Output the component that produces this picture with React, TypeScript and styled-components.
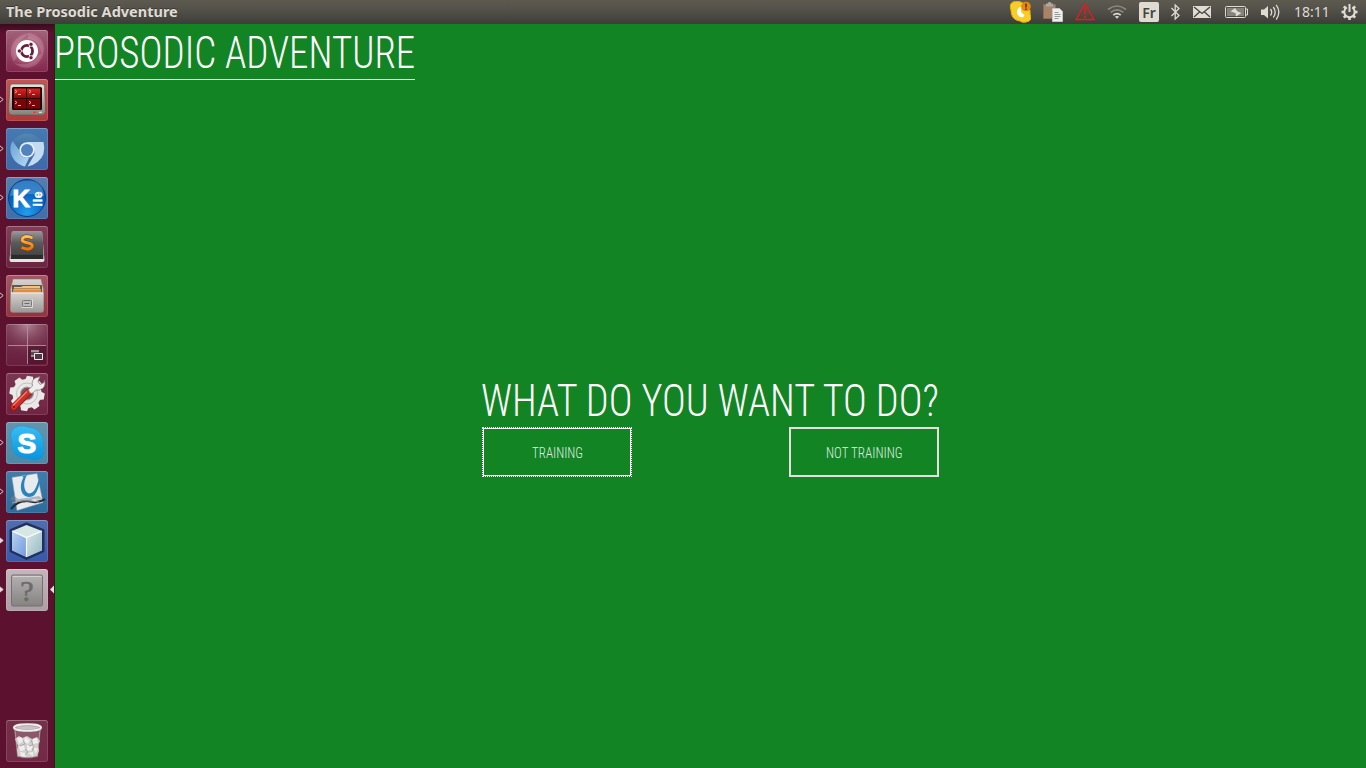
import React, { useLayoutEffect, useRef, useState } from "react";
import styled, { createGlobalStyle, css } from "styled-components";

const GlobalStyle = createGlobalStyle`
  * { box-sizing: border-box; }
  body { margin: 0; background: #138424; overflow: hidden; }
`;

const condensed = css`
  font-family: Roboto, "Liberation Sans", sans-serif;
  font-weight: 330;
  font-stretch: 75%;
`;

const Desktop = styled.div`
  width: 100vw;
  height: 100vh;
  display: flex;
  flex-direction: column;
`;

const TopBar = styled.header`
  flex: none;
  height: 24px;
  padding: 0 8px 0 6px;
  display: flex;
  justify-content: space-between;
  align-items: center;
  background: linear-gradient(#5d5a50 0, #53514a 40%, #3e3d38 100%);
  color: #dfdbd2;
  font-family: "Noto Sans", "Open Sans", sans-serif;
`;

const WindowTitle = styled.div`
  font-size: 14px;
  font-weight: 700;
  line-height: 24px;
  text-shadow: 0 -1px 0 rgba(30, 28, 25, 0.5);
`;

const Tray = styled.div`
  display: flex;
  gap: 12px;
  height: 24px;
  & > svg { display: block; flex: none; }
`;

const Keyboard = styled.div`
  width: 20px;
  height: 20px;
  margin-top: 2px;
  border-radius: 2px;
  background: #dfdbd2;
  color: #45433e;
  display: flex;
  justify-content: center;
  font-size: 14px;
  font-weight: 600;
  line-height: 21px;
`;

const Clock = styled.div`
  width: 35px;
  font-size: 14px;
  line-height: 24px;
`;

const Body = styled.div`
  flex: 1;
  display: flex;
  min-height: 0;
`;

const Launcher = styled.nav`
  flex: none;
  width: 55px;
  padding: 6px 0;
  display: flex;
  flex-direction: column;
  gap: 7px;
  border-right: 1px solid #3d1626;
  background: linear-gradient(#3d0a1e 0, #5c112f 9px, #5c112f 100%);
`;

const Slot = styled.div<{ $last?: boolean }>`
  flex: none;
  height: 42px;
  display: flex;
  align-items: center;
  margin-top: ${(p) => (p.$last ? "auto" : "0")};
`;

const Marker = styled.div`
  width: 6px;
  height: 9px;
  margin-top: -1px;
  & > svg { display: block; }
`;

const Tile = styled.div<{ $top: string; $bottom: string }>`
  width: 42px;
  height: 42px;
  border-radius: 3px;
  overflow: hidden;
  background: linear-gradient(${(p) => p.$top}, ${(p) => p.$bottom});
  box-shadow: inset 0 0 0 1px rgba(255, 255, 255, 0.12), inset 0 1px 0 rgba(255, 255, 255, 0.2);
  & > svg { display: block; }
`;

const Game = styled.main`
  flex: 1;
  background: #138424;
  color: #fff;
  display: flex;
  flex-direction: column;
  align-items: flex-start;
`;

const Heading = styled.h1`
  ${condensed}
  margin: 0;
  height: 56px;
  font-size: 44px;
  line-height: 58px;
  border-bottom: 1px solid #fff;
`;

const Stage = styled.section`
  flex: 1;
  align-self: stretch;
  display: flex;
  flex-direction: column;
  align-items: center;
  justify-content: center;
`;

const Prompt = styled.div`
  width: 457px;
`;

const Question = styled.h2`
  ${condensed}
  margin: 0;
  height: 55px;
  font-size: 44px;
  line-height: 58px;
`;

const Choices = styled.div`
  display: flex;
  justify-content: space-between;
`;

const Choice = styled.button<{ $focused?: boolean }>`
  ${condensed}
  width: 150px;
  height: 50px;
  padding: 3px 0 0;
  display: flex;
  align-items: center;
  justify-content: center;
  background: transparent;
  color: #dfeee1;
  font-size: 15px;
  outline: none;
  border: ${(p) => (p.$focused ? "1px dotted #fff" : "2px solid #e4e0e0")};
  box-shadow: ${(p) => (p.$focused ? "inset 0 0 0 1px #fff" : "none")};
`;

const FitBox = styled.span`
  display: block;
  white-space: nowrap;
`;

const FitInner = styled.span`
  display: inline-block;
  transform-origin: 0 50%;
`;

/* Squeezes or stretches one line of text to an exact width. */
function Fit({ width, children }: { width: number; children: string }) {
  const ref = useRef<HTMLSpanElement>(null);
  const [scale, setScale] = useState(1);
  useLayoutEffect(() => {
    if (ref.current) setScale(width / ref.current.offsetWidth);
  }, [width, children]);
  return (
    <FitBox style={{ width }}>
      <FitInner ref={ref} style={{ transform: `scaleX(${scale})` }}>
        {children}
      </FitInner>
    </FitBox>
  );
}

const HeadlineText = styled.div`
  margin-left: -1px;
`;

const Icon = ({ children }: { children: React.ReactNode }) => (
  <svg width="42" height="42" viewBox="0 0 42 42">{children}</svg>
);

const DashIcon = () => (
  <Icon>
    <defs>
      <radialGradient id="dash"><stop offset="0" stopColor="#f0ccd8" /><stop offset=".6" stopColor="#c0748f" stopOpacity=".6" /><stop offset="1" stopColor="#8d3456" stopOpacity="0" /></radialGradient>
    </defs>
    <circle cx="21" cy="20" r="22" fill="url(#dash)" opacity=".7" />
    <g fill="#f0ccd8" opacity=".22">
      <path d="M8 32C0 18 8 4 26 3 14 7 9 16 12 25z" /><path d="M22 3c14 1 20 14 13 26 1-12-3-19-13-20z" /><path d="M37 22C36 36 20 43 8 33c10 3 19 1 23-6z" />
    </g>
    <circle cx="21" cy="21" r="11" fill="#fff" />
    <circle cx="21" cy="21" r="5.6" fill="none" stroke="#6a1d3c" strokeWidth="2.8" />
    <g stroke="#fff" strokeWidth="1.1"><path d="M21 21h-8M21 21l4.6-8M21 21l4.6 8" /></g>
    <circle cx="21" cy="21" r="3.9" fill="#fff" />
    <g fill="#6a1d3c" stroke="#fff" strokeWidth=".7"><circle cx="13.4" cy="21" r="2.1" /><circle cx="25" cy="14.3" r="2.1" /><circle cx="25" cy="27.7" r="2.1" /></g>
  </Icon>
);

const TerminalIcon = () => (
  <Icon>
    <defs>
      <linearGradient id="mon" x2="0" y2="1"><stop stopColor="#e4e2dc" /><stop offset="1" stopColor="#85827c" /></linearGradient>
      <linearGradient id="red" x2="0" y2="1"><stop stopColor="#e02424" /><stop offset="1" stopColor="#8d0808" /></linearGradient>
    </defs>
    <path d="M6 5h30q2.5 0 2.5 2.5L39.5 31q0 5-4 5h-29q-4 0-4-5L4 7.500q0-2.500 2-2.500z" fill="url(#mon)" stroke="#5e5a57" strokeWidth=".7" />
    <rect x="6" y="8" width="30" height="23" rx="1.5" fill="#250406" />
    <path d="M8 9.500h12v9.500H8zM21 9.500h13v9.500H21z" fill="url(#red)" />
    <path d="M8 20h12v9.500H8zM21 20h13v9.500H21z" fill="#7a0508" />
    <path d="M9 11l2 1.5L9 14M12 15.500h3M23 11l2 1.5-2 1.500M26 15.500h3M9 22l2 1.5L9 25M12 26.500h3M23 22l2 1.5-2 1.500M26 26.500h3" fill="none" stroke="#ffb9b9" strokeWidth=".9" />
    <path d="M27 33.300h3" stroke="#fa3535" strokeWidth="1.5" />
    <path d="M33 33.300h3" stroke="#eee" />
  </Icon>
);

const ChromiumIcon = () => (
  <Icon>
    <defs>
      <linearGradient id="cr" x2="0" y2="1"><stop stopColor="#5587b0" /><stop offset="1" stopColor="#3a6ea5" /></linearGradient>
      <linearGradient id="cl" x2="1" y2="1"><stop stopColor="#6ba3d4" /><stop offset="1" stopColor="#b5d8f2" /></linearGradient>
    </defs>
    <path d="M7 13Q12 5.500 21 5.500T35.500 14H21L13 22z" fill="url(#cr)" />
    <path d="M6.500 13C1 23 7 36 19 38.500L23 30q-8 1-10-8z" fill="url(#cl)" />
    <path d="M21 14h16.500q3 13-6 20-5 4-10 4.500l7-12q1-7-7.500-12.500z" fill="#c3dbf1" />
    <circle cx="21" cy="22" r="7.700" fill="#e3eef8" />
    <circle cx="21" cy="22" r="6" fill="#5283bd" />
  </Icon>
);

const KileIcon = () => (
  <Icon>
    <defs>
      <radialGradient id="kile" cx=".5" cy=".9" r=".95"><stop stopColor="#239df0" /><stop offset=".55" stopColor="#0763bd" /><stop offset="1" stopColor="#064997" /></radialGradient>
    </defs>
    <circle cx="21" cy="21" r="18.5" fill="url(#kile)" stroke="#064384" />
    <path d="M4 19Q5 4 21 3.5T38 19Q22 15 4 19z" fill="#6eb4ec" opacity=".45" />
    <text x="6.500" y="29.500" fill="#fff" stroke="#fff" strokeWidth="1" fontFamily="Liberation Sans, sans-serif" fontSize="24" fontWeight="700">K</text>
    <text transform="translate(35.500 29.500) rotate(-90)" fill="#fff" stroke="#fff" strokeWidth=".4" fontFamily="Liberation Sans, sans-serif" fontSize="12" fontWeight="700" textLength="15">ile</text>
  </Icon>
);

const SublimeIcon = () => (
  <Icon>
    <defs>
      <linearGradient id="sub" x2="0" y2="1"><stop stopColor="#9a9a9a" /><stop offset=".45" stopColor="#5a5a5a" /><stop offset="1" stopColor="#404040" /></linearGradient>
      <linearGradient id="so" x2="0" y2="1"><stop stopColor="#ffc15b" /><stop offset="1" stopColor="#ec7306" /></linearGradient>
    </defs>
    <path d="M6 6h30l2.500 28q0 2-2 2h-31q-2 0-2-2z" fill="#e4e2e2" />
    <path d="M7.500 5h27q2 0 2 2l1 22q0 2-2 2h-29q-2 0-2-2l1-22q0-2 2-2z" fill="url(#sub)" />
    <path d="M5 27.500h32l.5 5.500h-33z" fill="#2b2b2b" /><path d="M5 28h32" stroke="#6b6b6b" strokeWidth=".7" />
    <path d="M26.500 12Q21 9.500 17.500 11.500 14 14.500 19 16.200 27.500 17.500 26 21 23 25 15.500 21.500" fill="none" stroke="#6b3a12" strokeWidth="4" />
    <path d="M26.500 12Q21 9.500 17.500 11.500 14 14.500 19 16.200 27.500 17.500 26 21 23 25 15.500 21.500" fill="none" stroke="url(#so)" strokeWidth="3" />
  </Icon>
);

const FilesIcon = () => (
  <Icon>
    <defs>
      <linearGradient id="cab" x2="0" y2="1"><stop stopColor="#d5d2cf" /><stop offset="1" stopColor="#9a9896" /></linearGradient>
    </defs>
    <path d="M7 4h28l2.500 10v21q0 2-2 2h-29q-2 0-2-2V14z" fill="url(#cab)" stroke="#817c78" strokeWidth=".6" />
    <path d="M6 10h30v8H6z" fill="#65594c" />
    <path d="M8 12h7l2-1h17v2H8z" fill="#f6c276" /><path d="M7 14h28v4H7z" fill="#e58a37" /><path d="M8 14h26" stroke="#fbbf6f" />
    <path d="M5 17.500h32.500V35q0 2.500-2 2.500h-29q-2 0-2-2.500z" fill="url(#cab)" /><path d="M5 18h32" stroke="#eee" />
    <rect x="16.5" y="25.5" width="9" height="6" rx="1" fill="#bebcb9" stroke="#777" /><path d="M15.5 32.5h11v-8" fill="none" stroke="#eee" strokeWidth=".7" /><path d="M18.5 28.5h5" stroke="#6c6a68" />
  </Icon>
);

const WorkspaceIcon = () => (
  <Icon>
    <defs><radialGradient id="ws" cx=".5" cy="0" r=".75"><stop stopColor="#d8bcc6" stopOpacity=".6" /><stop offset="1" stopColor="#81415a" stopOpacity="0" /></radialGradient></defs>
    <path d="M0 0h42v42H0z" fill="url(#ws)" />
    <path d="M22 22h18v18H22z" fill="#421024" opacity=".55" />
    <path d="M21.5 2v38M2 21.5h38" stroke="#b490a0" strokeWidth=".9" />
    <path d="M25 27h8v5h-8z" fill="#5a4850" /><path d="M25 27h8M25 32h4" stroke="#bdb2b6" strokeWidth="1.4" />
    <path d="M28.5 29.5h8v6h-8z" fill="#493c42" stroke="#f0ecee" />
  </Icon>
);

const SettingsIcon = () => (
  <Icon>
    <g transform="translate(21 20.5)">
      <g fill="#e9e8e7">
        {[0, 45, 90, 135].map((a) => <path key={a} transform={`rotate(${a + 10})`} d="M-3-17.500h6l1.500 5v25l-1.500 5h-6l-1.500-5v-25z" />)}
        <circle r="14.500" />
      </g>
      <circle r="10.500" fill="none" stroke="#c4c2c1" />
      <circle r="6.500" fill="#7f5462" stroke="#aaa5a6" />
    </g>
    <path d="M7.500 34.500L23 19" stroke="#8a1a16" strokeWidth="7" strokeLinecap="round" />
    <path d="M7.800 34L23 18.500" stroke="#cf2f27" strokeWidth="5.500" strokeLinecap="round" />
    <path d="M7 32.500L21 18.500" stroke="#f08072" strokeWidth="1.300" />
    <circle cx="8" cy="34" r="1" fill="#8e1010" />
    <path d="M22.500 16.500l4-3.500q-1.500-6 3-8l4.500-1.500-2 5 2 3 4-2 .500-2.500q1.500 6-2 8.500-3.500 2.500-6.500 1.500l-4 3.500q-3 0-3.500-4z" fill="#eee" stroke="#81777a" strokeWidth=".7" />
  </Icon>
);

const SkypeIcon = () => (
  <Icon>
    <defs><linearGradient id="sky" x2="0" y2="1"><stop stopColor="#39bdf2" /><stop offset="1" stopColor="#0794df" /></linearGradient></defs>
    <path d="M13 4q5-1 9 1 14 1 15.500 15-.5 4 .5 8 0 9-8 10-5 0-8-1.500Q7 37 5.500 23q.5-4-1-9 0-8 8.500-10z" fill="url(#sky)" stroke="#2c91c0" strokeWidth=".6" />
    <text x="11.500" y="31" fill="#fff" stroke="#fff" strokeWidth="1.200" fontFamily="Liberation Sans, sans-serif" fontSize="28" fontWeight="700">S</text>
  </Icon>
);

const WriterIcon = () => (
  <Icon>
    <path d="M6 6.500l25-4 6 29-26 8z" fill="#e8ebee" stroke="#9ba8b3" strokeWidth=".5" />
    <path d="M16 5.500l5-1.500c-4 6-4 17 2 18.500 6 0 8-9 11-17.500l1.500.500C33 15 31 26 23.500 26 14 26 13 14 17.500 6.500z" fill="#2b83be" />
    <path d="M4 29l3-5 5 4 8-1 13-2 4 4-9-1-9 4-10-1z" fill="#78858d" opacity=".5" />
    <path d="M5 38c5-6 12-9 19-7.500q9 2 15-2.500" fill="none" stroke="#292d32" strokeWidth="2.1" />
    <path d="M6 32q10-4 27-1" fill="none" stroke="#9aa5ad" strokeWidth="1" />
  </Icon>
);

const CubeIcon = () => (
  <Icon>
    <defs>
      <linearGradient id="cubeL" x2="1" y2="1"><stop stopColor="#b8d2f1" /><stop offset="1" stopColor="#7399df" /></linearGradient>
      <linearGradient id="cubeR" x2="1" y2="1"><stop stopColor="#d5e5e7" /><stop offset="1" stopColor="#96b8c4" /></linearGradient>
    </defs>
    <path d="M20.5 4L37 10.500V31L20.5 38.500 5 31V10.500z" fill="#f1f6fa" stroke="#22305f" strokeWidth="3" strokeLinejoin="round" />
    <path d="M20.5 5L36 11 20.5 17.500 6 11z" fill="#d6e7e4" />
    <path d="M6 11.500l14 6.500v19L6 30.500z" fill="url(#cubeL)" /><path d="M36 11.500l-15 6.500v19l15-6.500z" fill="url(#cubeR)" />
    <path d="M6 11l14.5 6.500L36 11M20.5 17.500v19" stroke="#f6fafb" fill="none" strokeWidth="1.2" />
  </Icon>
);

const UnknownIcon = () => (
  <Icon>
    <defs><linearGradient id="unk" x2="0" y2="1"><stop stopColor="#b4b2b1" /><stop offset="1" stopColor="#858382" /></linearGradient></defs>
    <rect x="5.5" y="6" width="31" height="31" rx="1.5" fill="url(#unk)" stroke="#737171" />
    <path d="M7 7.5h28" stroke="#d2d0d0" />
    <text x="21" y="31.500" textAnchor="middle" fill="#6d6b6b" stroke="#6d6b6b" strokeWidth=".7" fontFamily="Liberation Serif, serif" fontSize="30">?</text>
  </Icon>
);

const TrashIcon = () => (
  <Icon>
    <path d="M8 8h27l-3 29q-11 3-21 0z" fill="#baa5ad" opacity=".35" />
    <path d="M9 10l3 27M34 10l-3 27" stroke="#b7a4ab" strokeWidth=".8" />
    <path d="M9 19l4-3 3 2 5-2 5 3 5-2 3 4-2 4 1 6-2 5q-10 3-19 0l-1-6 1-4z" fill="#d0cfce" />
    <g fill="#efeeed"><path d="M11 18l4-1 3 4-5 3zM19 17l5 3-2 4-4-2zM27 19l4-1 1 5-5 1zM13 26l5-1 1 5-5 1zM21 25l6 1-2 5-4-1zM28 27l4 2-3 5zM14 32l5 1 1 4-5-1zM22 33l5-1v4z" /></g>
    <path d="M17 20l2 4-5 2M25 20l2 5-4 1M19 29l3 3-3 3M28 26l-2 5" stroke="#aaa7a7" fill="none" />
    <ellipse cx="21.5" cy="7.500" rx="13.5" ry="3.3" fill="#a79ba0" stroke="#eeecec" strokeWidth="2" />
    <ellipse cx="21.5" cy="7.6" rx="10.7" ry="1.7" fill="#c9c4c5" />
  </Icon>
);

type Running = "open" | "active";
const apps: { name: string; art: React.ReactNode; top: string; bottom: string; running?: Running; current?: boolean }[] = [
  { name: "dash", art: <DashIcon />, top: "#a1647a", bottom: "#84284d" },
  { name: "terminal", art: <TerminalIcon />, top: "#bf5757", bottom: "#b03939", running: "open" },
  { name: "chromium", art: <ChromiumIcon />, top: "#4779b2", bottom: "#3d6aaa", running: "open" },
  { name: "kile", art: <KileIcon />, top: "#547faf", bottom: "#416da9", running: "open" },
  { name: "sublime", art: <SublimeIcon />, top: "#804158", bottom: "#692440" },
  { name: "files", art: <FilesIcon />, top: "#a35863", bottom: "#92343d", running: "open" },
  { name: "workspaces", art: <WorkspaceIcon />, top: "#77364f", bottom: "#681e3d" },
  { name: "settings", art: <SettingsIcon />, top: "#7b3651", bottom: "#712442" },
  { name: "skype", art: <SkypeIcon />, top: "#6594ad", bottom: "#4b89a6", running: "open" },
  { name: "writer", art: <WriterIcon />, top: "#427da9", bottom: "#2c6c9c", running: "open" },
  { name: "netbeans", art: <CubeIcon />, top: "#526ead", bottom: "#3659aa", running: "active" },
  { name: "unknown", art: <UnknownIcon />, top: "#c4b6bc", bottom: "#ad9ea6", running: "active", current: true },
];

const SkypeTray = () => (
  <svg width="22" height="24" viewBox="0 0 22 24">
    <path d="M4 2q6-2 12 2 6 4 5 10 3 7-4 8-4 1-6-1-9-1-9-11Q0 4 4 2z" fill="#f8cd25" stroke="#e6b416" />
    <path d="M10.500 7q-5 5-.5 9.500l3 1q2-.5 2.500-2.500-5-2-3-8z" fill="#fff" />
    <circle cx="17" cy="6.5" r="4.8" fill="#e98714" /><path d="M17 3.5v4M17 8.5v1.5" stroke="#683303" strokeWidth="1.6" />
  </svg>
);
const ClipboardTray = () => (
  <svg width="20" height="24" viewBox="0 0 20 24">
    <path d="M.5 4.500h12v14H.5z" fill="#a78468" stroke="#8d6c55" /><path d="M3 3.500h2L5.500 2h2L8 3.500h2v3H3z" fill="#aaa9a5" />
    <path d="M9.500 8.500h7l3 3v10h-10z" fill="#eee" stroke="#c4c4c4" /><path d="M11.500 12.500h4M11.500 14.500h6M11.500 16.500h6M11.500 18.500h4" stroke="#999" />
  </svg>
);
const WarningTray = () => (
  <svg width="20" height="24" viewBox="0 0 20 24">
    <path d="M10 4L19 19.5H1z" fill="none" stroke="#f21717" strokeWidth="1.3" /><path d="M10 8.5v6M10 16v2" stroke="#f21717" strokeWidth="1.5" />
  </svg>
);
const WifiTray = () => (
  <svg width="20" height="24" viewBox="0 0 20 24" fill="none" strokeWidth="1.7">
    <path d="M1 9.5q9-7 18 0" stroke="#8b8881" /><path d="M3.7 12.3q6.3-5 12.6 0" stroke="#8b8881" /><path d="M6.3 15q3.7-2.8 7.4 0" stroke="#dfdbd2" /><path d="M7.8 16.5q2.2-1.2 4.4 0L10 18.8z" fill="#dfdbd2" />
  </svg>
);
const BluetoothTray = () => (
  <svg width="10" height="24" viewBox="0 0 10 24"><path d="M0.5 8L8 15.5 4.2 19V5L8 8.5.5 16" fill="none" stroke="#dfdbd2" strokeWidth="1.3" /></svg>
);
const MailTray = () => (
  <svg width="20" height="24" viewBox="0 0 20 24"><path d="M0 6h18v12H0z" fill="#dfdbd2" /><path d="M1 7l8 6.5L17 7M1 17l5.5-5M17 17l-5.5-5" fill="none" stroke="#46443f" strokeWidth="1.3" /></svg>
);
const BatteryTray = () => (
  <svg width="23" height="24" viewBox="0 0 23 24">
    <rect x=".5" y="6.5" width="20" height="11" rx="1" fill="none" stroke="#dfdbd2" /><path d="M21 9h1.500v6H21" fill="none" stroke="#dfdbd2" /><path d="M2 8h17v8H2z" fill="#85827b" /><path d="M10 8l-4.500 3.500 5 1.500.5 3.500 5.500-3.500-4-1.500z" fill="#dfdbd2" />
  </svg>
);
const SoundTray = () => (
  <svg width="22" height="24" viewBox="0 0 22 24"><path d="M1 9.5h3L8 6v12.5L4 15H1z" fill="#dfdbd2" /><g fill="none" stroke="#dfdbd2" strokeWidth="1.3"><path d="M10.5 9q2.4 3.2 0 6.5M13.3 7q3.8 5.2 0 10.5M16.2 4.8q5.3 7.3 0 14.7" /></g></svg>
);
const PowerTray = () => (
  <svg width="17" height="24" viewBox="0 0 17 24">
    <g transform="translate(8.5 12)" stroke="#dfdbd2" fill="none">
      {[45, 90, 135, 180, 225, 270, 315].map((a) => <path key={a} transform={`rotate(${a})`} d="M0-5v-3" strokeWidth="2.6" />)}
      <path d="M-2.7-4.5A5.2 5.2 0 1 0 2.7-4.5" strokeWidth="2" /><path d="M0-8V0" strokeWidth="2" />
    </g>
  </svg>
);

export default function App() {
  return (
    <Desktop>
      <GlobalStyle />
      <TopBar>
        <WindowTitle><Fit width={172}>The Prosodic Adventure</Fit></WindowTitle>
        <Tray>
          <SkypeTray />
          <ClipboardTray />
          <WarningTray />
          <WifiTray />
          <Keyboard>Fr</Keyboard>
          <BluetoothTray />
          <MailTray />
          <BatteryTray />
          <SoundTray />
          <Clock><Fit width={36}>18:11</Fit></Clock>
          <PowerTray />
        </Tray>
      </TopBar>
      <Body>
        <Launcher>
          {apps.map((app) => (
            <Slot key={app.name}>
              <Marker>
                {app.running && (
                  <svg width="6" height="9" viewBox="0 0 6 9">
                    <path d="M-.5 1.5L3.2 4.5-.5 7.5z" fill={app.running === "active" ? "#e6dfe2" : "none"} stroke="#d9cbd1" />
                  </svg>
                )}
              </Marker>
              <Tile $top={app.top} $bottom={app.bottom}>{app.art}</Tile>
              {app.current && (
                <Marker>
                  <svg width="6" height="9" viewBox="0 0 6 9"><path d="M6 .5L2 4.5l4 4z" fill="#e6dfe2" /></svg>
                </Marker>
              )}
            </Slot>
          ))}
          <Slot $last>
            <Marker />
            <Tile $top="#743148" $bottom="#732946"><TrashIcon /></Tile>
          </Slot>
        </Launcher>
        <Game>
          <Heading><HeadlineText><Fit width={361}>PROSODIC ADVENTURE</Fit></HeadlineText></Heading>
          <Stage>
            <Prompt>
              <Question><HeadlineText><Fit width={458}>WHAT DO YOU WANT TO DO?</Fit></HeadlineText></Question>
              <Choices>
                <Choice $focused><Fit width={51}>TRAINING</Fit></Choice>
                <Choice><Fit width={77}>NOT TRAINING</Fit></Choice>
              </Choices>
            </Prompt>
          </Stage>
        </Game>
      </Body>
    </Desktop>
  );
}
